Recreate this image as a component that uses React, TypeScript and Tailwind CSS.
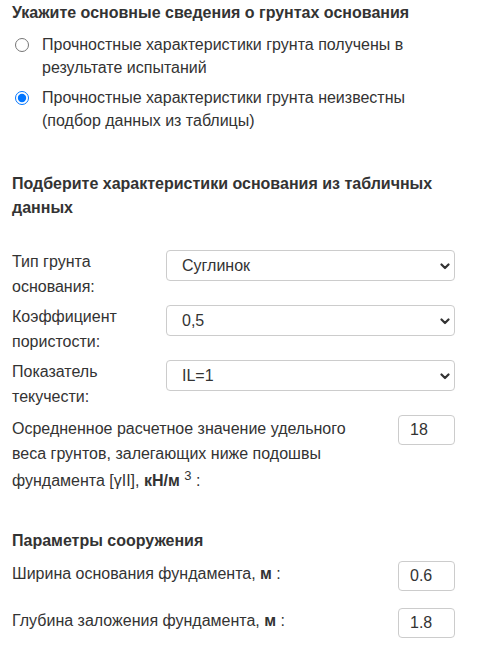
import React from "react";

function Chevron() {
  return (
    <svg
      className="pointer-events-none absolute right-[5px] top-[13px]"
      width="10"
      height="7"
      viewBox="0 0 10 7"
    >
      <path d="M1.5 1.5 L5 5 L8.5 1.5" fill="none" stroke="#333" strokeWidth="2.2" strokeLinecap="round" strokeLinejoin="round" />
    </svg>
  );
}

function SelectRow({ label1, label2, value }: { label1: string; label2: string; value: string }) {
  return (
    <div className="flex items-start">
      <div className="w-[154px] leading-[25px]">
        {label1}
        <br />
        {label2}
      </div>
      <div className="relative mt-[1px] w-[289px]">
        <select
          defaultValue={value}
          className="h-[31px] w-full appearance-none rounded-[4px] border border-[#ccc] bg-white pl-[15px] text-[16px] text-[#333] outline-none"
        >
          <option value={value}>{value}</option>
        </select>
        <Chevron />
      </div>
    </div>
  );
}

function NumInput({ value, className = "" }: { value: string; className?: string }) {
  return (
    <input
      type="text"
      defaultValue={value}
      className={
        "h-[30px] w-[57px] shrink-0 rounded-[4px] border border-[#ccc] bg-white pl-[11px] text-[16px] text-[#333] outline-none " +
        className
      }
    />
  );
}

export default function App() {
  return (
    <div
      className="w-[492px] bg-white pl-[12px] pr-[37px] text-[16px] text-[#333]"
      style={{ fontFamily: '"Liberation Sans", Arial, sans-serif' }}
    >
      <div className="pt-[1px] font-bold leading-[24px] text-[#333]">
        Укажите основные сведения о грунтах основания
      </div>

      <label className="mt-[8px] flex items-start">
        <input type="radio" name="r" className="ml-[3px] mt-[5px] h-[14px] w-[14px] shrink-0" />
        <span className="ml-[13px] leading-[23px]">
          Прочностные характеристики грунта получены в
          <br />
          результате испытаний
        </span>
      </label>

      <label className="mt-[7px] flex items-start">
        <input type="radio" name="r" defaultChecked className="ml-[3px] mt-[5px] h-[14px] w-[14px] shrink-0" />
        <span className="ml-[13px] leading-[23px]">
          Прочностные характеристики грунта неизвестны
          <br />
          (подбор данных из таблицы)
        </span>
      </label>

      <div className="mt-[40px] font-bold leading-[24px]">
        Подберите характеристики основания из табличных данных
      </div>

      <div className="mt-[29px] flex flex-col gap-[5px]">
        <SelectRow label1="Тип грунта" label2="основания:" value="Суглинок" />
        <SelectRow label1="Коэффициент" label2="пористости:" value="0,5" />
        <SelectRow label1="Показатель" label2="текучести:" value="IL=1" />
      </div>

      <div className="mt-[5px] flex items-start justify-between">
        <div className="w-[350px] pt-[2px] leading-[25px]">
          <div>Осредненное расчетное значение удельного</div>
          <div>веса грунтов, залегающих ниже подошвы</div>
          <div className="mt-[2px]">
            фундамента [γII], <b>кН/м</b> <sup className="text-[13px]">3</sup> :
          </div>
        </div>
        <NumInput value="18" className="mt-[1px]" />
      </div>

      <div className="mt-[36px] font-bold leading-[24px]">Параметры сооружения</div>

      <div className="mt-[8px] flex items-start justify-between">
        <div className="mt-[1px] leading-[24px]">
          Ширина основания фундамента, <b>м</b> :
        </div>
        <NumInput value="0.6" />
      </div>

      <div className="mt-[17px] flex items-start justify-between pb-[16px]">
        <div className="mt-[1px] leading-[24px]">
          Глубина заложения фундамента, <b>м</b> :
        </div>
        <NumInput value="1.8" />
      </div>
    </div>
  );
}
